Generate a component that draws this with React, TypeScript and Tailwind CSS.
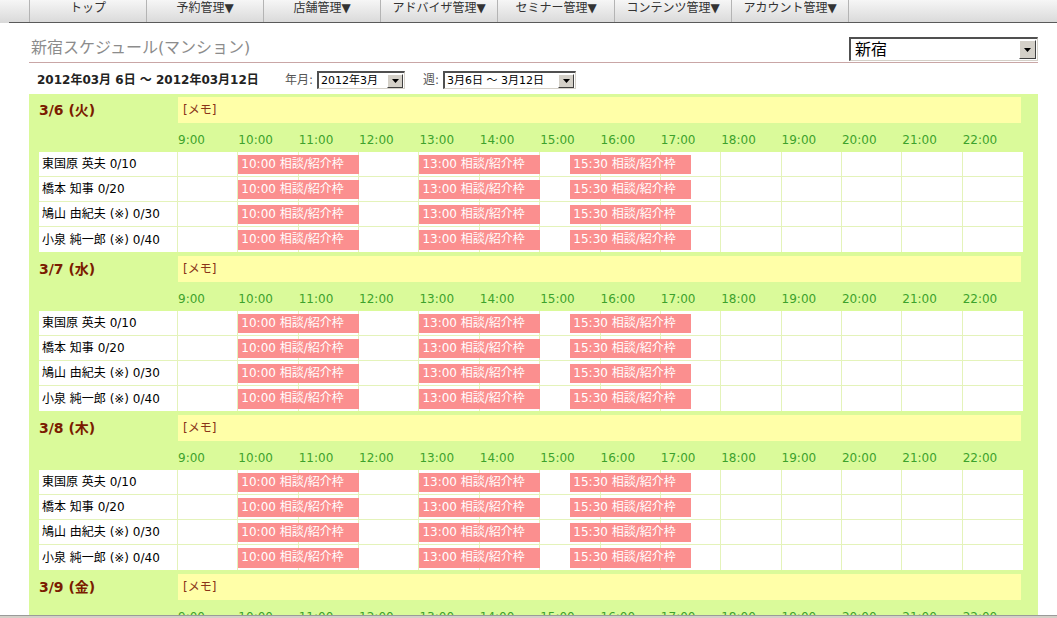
import React from "react";

// schedule data
const NAV_ITEMS = [
  "トップ",
  "予約管理▼",
  "店舗管理▼",
  "アドバイザ管理▼",
  "セミナー管理▼",
  "コンテンツ管理▼",
  "アカウント管理▼",
];

const DAYS = ["3/6 (火)", "3/7 (水)", "3/8 (木)", "3/9 (金)"];

const STAFF = [
  "東国原 英夫 0/10",
  "橋本 知事 0/20",
  "鳩山 由紀夫 (※) 0/30",
  "小泉 純一郎 (※) 0/40",
];

const HOURS = [9, 10, 11, 12, 13, 14, 15, 16, 17, 18, 19, 20, 21, 22];

// each hour = 2 half-hour columns
const CELL_STARTS = [
  "col-start-1",
  "col-start-3",
  "col-start-5",
  "col-start-7",
  "col-start-9",
  "col-start-11",
  "col-start-13",
  "col-start-15",
  "col-start-17",
  "col-start-19",
  "col-start-21",
  "col-start-23",
  "col-start-25",
  "col-start-27",
];

const SLOTS = [
  { time: "10:00", start: "col-start-3" },
  { time: "13:00", start: "col-start-9" },
  { time: "15:30", start: "col-start-14" },
];

const FONT = "font-['DejaVu_Sans','Noto_Sans_CJK_JP',sans-serif]";

const ArrowButton = ({ className }: { className: string }) => (
  <div
    className={`flex items-center justify-center bg-[#d4d0c8] border border-t-[#ffffff] border-l-[#ffffff] border-r-[#404040] border-b-[#404040] ${className}`}
  >
    <svg width="7" height="4" viewBox="0 0 7 4">
      <path d="M0 0h7L3.5 4z" fill="#000" />
    </svg>
  </div>
);

const Select = ({
  value,
  className,
  textClass,
  buttonClass,
}: {
  value: string;
  className: string;
  textClass: string;
  buttonClass: string;
}) => (
  <div
    className={`flex items-center bg-white border-t-2 border-l-2 border-r border-b border-t-[#505050] border-l-[#505050] border-r-[#d4d0c8] border-b-[#d4d0c8] ${className}`}
  >
    <span className={`flex-1 text-black whitespace-nowrap ${textClass}`}>{value}</span>
    <ArrowButton className={buttonClass} />
  </div>
);

const DayBlock = ({ label }: { label: string }) => (
  <div className="mb-[4px]">
    {/* day label + memo */}
    <div className="flex h-[26px]">
      <div className="w-[139px] flex items-center text-[14px] font-bold text-[#7a1c00]">{label}</div>
      <div className="flex-1 mr-[2px] bg-[#ffffa8] flex items-center pl-[5px] text-[12px] text-[#8a3418]">
        [メモ]
      </div>
    </div>

    {/* hour labels */}
    <div className="flex h-[29px]">
      <div className="w-[139px]" />
      <div className="flex-1 grid grid-cols-[repeat(14,minmax(0,1fr))] pt-[10px]">
        {HOURS.map((h) => (
          <div key={h} className="text-[12px] leading-[14px] text-[#3da22c]">
            {h}:00
          </div>
        ))}
      </div>
    </div>

    {/* staff rows */}
    {STAFF.map((name, r) => (
      <div
        key={name}
        className={`flex h-[25px] bg-white ${r < STAFF.length - 1 ? "border-b border-[#e4f3ba]" : ""}`}
      >
        <div className="w-[139px] border-r border-[#e4f3ba] pl-[3px] flex items-center text-[12px] text-black whitespace-nowrap">
          {name}
        </div>
        <div className="flex-1 grid grid-cols-[repeat(28,minmax(0,1fr))]">
          {HOURS.map((h, i) => (
            <div
              key={h}
              className={`${CELL_STARTS[i]} col-span-2 row-start-1 ${i < HOURS.length - 1 ? "border-r border-[#e4f3ba]" : ""}`}
            />
          ))}
          {SLOTS.map((s) => (
            <div
              key={s.time}
              className={`${s.start} col-span-4 row-start-1 mt-[3px] mb-[2px] bg-[#fb8f8f] text-white text-[12px] leading-[19px] pl-[3px] whitespace-nowrap overflow-hidden`}
            >
              {s.time} 相談/紹介枠
            </div>
          ))}
        </div>
      </div>
    ))}
  </div>
);

export default function App() {
  return (
    <div className={`w-[1057px] h-[618px] flex flex-col bg-white overflow-hidden ${FONT}`}>
      <div className="flex-1 overflow-hidden">
        {/* top nav */}
        <div className="flex h-[23px] bg-gradient-to-b from-[#f6f6f6] to-[#d9d9d9]">
          <div className="w-[9px]" />
          <div className="flex-1 flex border-b border-[#5a5a5a] pl-[20px]">
            {NAV_ITEMS.map((item) => (
              <div
                key={item}
                className="w-[117px] border-l border-[#b4b4b4] text-center text-[12px] leading-[16px] text-[#333]"
              >
                {item}
              </div>
            ))}
            <div className="flex-1 border-l border-[#b4b4b4]" />
          </div>
        </div>

        <div className="pl-[29px] pr-[19px]">
          {/* title */}
          <div className="flex items-end justify-between mt-[14px] pb-[1px] border-b border-[#c9a6a6]">
            <div className="pl-[2px] pb-[3px] text-[16px] leading-[20px] text-[#8c8c8c]">
              新宿スケジュール(マンション)
            </div>
            <Select
              value="新宿"
              className="w-[189px] h-[24px]"
              textClass="pl-[4px] text-[16px] leading-[20px]"
              buttonClass="w-[17px] h-[19px] mr-[1px]"
            />
          </div>

          {/* date + filters */}
          <div className="flex items-center h-[31px] pt-[3px] text-[12px]">
            <div className="pl-[8px] w-[256px] font-bold text-[#222] whitespace-nowrap">
              2012年03月 6日 ～ 2012年03月12日
            </div>
            <span className="text-[#555]">年月:</span>
            <Select
              value="2012年3月"
              className="ml-[4px] w-[88px] h-[18px]"
              textClass="pl-[2px] text-[11px] leading-[14px]"
              buttonClass="w-[16px] h-[14px] mr-[1px]"
            />
            <span className="ml-[18px] text-[#555]">週:</span>
            <Select
              value="3月6日 ～ 3月12日"
              className="ml-[4px] w-[133px] h-[18px]"
              textClass="pl-[2px] text-[11px] leading-[14px]"
              buttonClass="w-[16px] h-[14px] mr-[1px]"
            />
          </div>

          {/* schedule */}
          <div className="bg-[#dafa9a] pt-[3px] pl-[10px] pr-[15px]">
            {DAYS.map((d) => (
              <DayBlock key={d} label={d} />
            ))}
          </div>
        </div>
      </div>
      <div className="h-[3px] border-t border-[#9a9a9a] bg-[#d4d0c8]" />
    </div>
  );
}
